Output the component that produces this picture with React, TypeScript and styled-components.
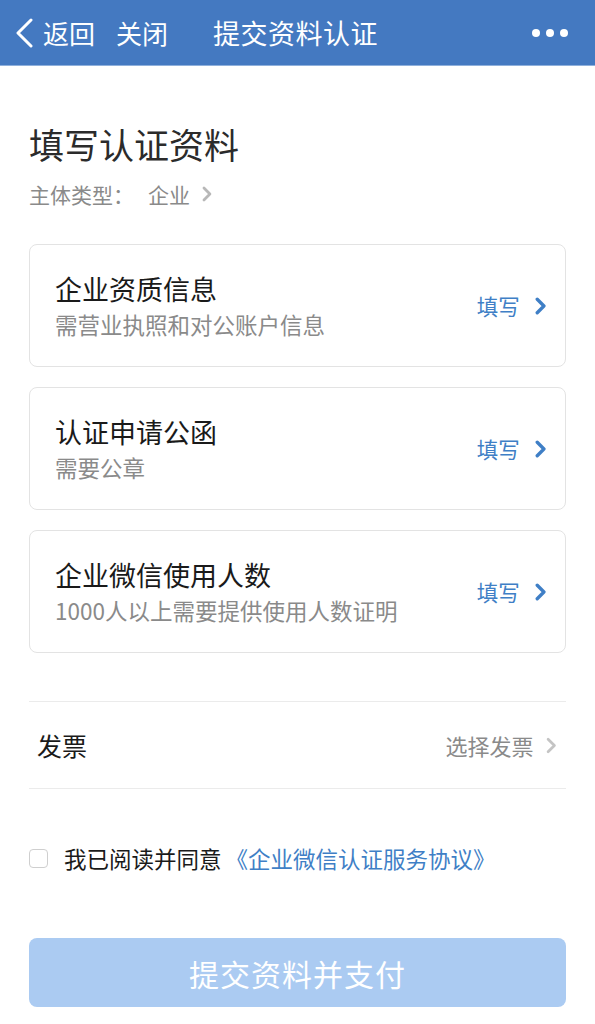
import React from "react"
import styled, { createGlobalStyle } from "styled-components"

const blue = "#4479c1"
const linkBlue = "#3f7fc6"
const gray = "#8a8a8a"

const GlobalStyle = createGlobalStyle`
  html, body {
    margin: 0;
    padding: 0;
    background: #fff;
  }
  body {
    font-family: "PingFang SC", "Noto Sans CJK SC", "Noto Sans", sans-serif;
  }
`

type Item = {
  title: string
  hint: string
}

const items: Item[] = [
  { title: "企业资质信息", hint: "需营业执照和对公账户信息" },
  { title: "认证申请公函", hint: "需要公章" },
  { title: "企业微信使用人数", hint: "1000人以上需要提供使用人数证明" },
]

const Chevron = ({ color, size = 14, weight = 2.4 }: { color: string; size?: number; weight?: number }) => (
  <svg width={size * 0.62} height={size} viewBox="0 0 10 16" fill="none">
    <path d="M2 2l6 6-6 6" stroke={color} strokeWidth={weight} strokeLinecap="round" strokeLinejoin="round" />
  </svg>
)

const App = () => {
  return (
    <Page>
      <GlobalStyle />
      <Header>
        <BackButton>
          <svg width="20" height="30" viewBox="0 0 20 30" fill="none">
            <path d="M17 2L4 15l13 13" stroke="#fff" strokeWidth="3" strokeLinecap="round" strokeLinejoin="round" />
          </svg>
          <HeaderText>返回</HeaderText>
        </BackButton>
        <HeaderText>关闭</HeaderText>
        <HeaderTitle>提交资料认证</HeaderTitle>
        <Dots>
          <Dot />
          <Dot />
          <Dot />
        </Dots>
      </Header>

      <Content>
        <PageTitle>填写认证资料</PageTitle>
        <TypeLine>
          <span>主体类型：</span>
          <TypeValue>企业</TypeValue>
          <Chevron color="#b8b8b8" size={16} weight={2.8} />
        </TypeLine>

        <CardList>
          {items.map(item => (
            <Card key={item.title}>
              <CardText>
                <CardTitle>{item.title}</CardTitle>
                <CardHint>{item.hint}</CardHint>
              </CardText>
              <CardAction>
                填写
                <Chevron color={linkBlue} size={18} weight={3} />
              </CardAction>
            </Card>
          ))}
        </CardList>

        <InvoiceRow>
          <InvoiceLabel>发票</InvoiceLabel>
          <InvoiceValue>
            选择发票
            <Chevron color="#c4c4c4" size={17} weight={2.6} />
          </InvoiceValue>
        </InvoiceRow>

        <Agreement>
          <Checkbox />
          <span>我已阅读并同意</span>
          <AgreementLink>《企业微信认证服务协议》</AgreementLink>
        </Agreement>

        <SubmitButton>提交资料并支付</SubmitButton>
      </Content>
    </Page>
  )
}

export default App

const Page = styled.div`
  width: 595px;
  height: 1024px;
  overflow: hidden;
  background: #fff;
`

const Header = styled.div`
  height: 66px;
  background: ${blue};
  border-bottom: 1px solid #8fb0dc;
  display: flex;
  align-items: center;
  padding: 0 0 0 14px;
  color: #fff;
  box-sizing: border-box;
`

const BackButton = styled.div`
  display: flex;
  align-items: center;
  gap: 9px;
  margin-right: 21px;
`

const HeaderText = styled.span`
  font-size: 26px;
  line-height: 1;
  color: #fff;
`

const HeaderTitle = styled.span`
  font-size: 27px;
  font-weight: 400;
  margin-left: 45px;
  letter-spacing: 0.5px;
`

const Dots = styled.div`
  margin-left: auto;
  margin-right: 27px;
  display: flex;
  gap: 6px;
`

const Dot = styled.span`
  width: 8px;
  height: 8px;
  border-radius: 50%;
  background: #fff;
`

const Content = styled.div`
  padding: 58px 29px 0 29px;
`

const PageTitle = styled.h1`
  margin: 0;
  font-size: 35px;
  font-weight: 400;
  color: #2b2b2b;
  line-height: 40px;
`

const TypeLine = styled.div`
  margin-top: 15px;
  display: flex;
  align-items: center;
  font-size: 21px;
  color: ${gray};
  line-height: 30px;
`

const TypeValue = styled.span`
  margin-left: 14px;
  margin-right: 12px;
`

const CardList = styled.div`
  margin-top: 35px;
  display: flex;
  flex-direction: column;
  gap: 20px;
`

const Card = styled.div`
  height: 123px;
  box-sizing: border-box;
  border: 1px solid #e3e3e3;
  border-radius: 8px;
  display: flex;
  align-items: center;
  padding: 0 19px 0 25px;
`

const CardText = styled.div`
  flex: 1;
  display: flex;
  flex-direction: column;
  gap: 3px;
`

const CardTitle = styled.div`
  font-size: 27px;
  color: #1a1a1a;
  line-height: 34px;
`

const CardHint = styled.div`
  font-size: 22.5px;
  color: ${gray};
  line-height: 30px;
`

const CardAction = styled.div`
  display: flex;
  align-items: center;
  gap: 15px;
  font-size: 21.5px;
  color: ${linkBlue};
`

const InvoiceRow = styled.div`
  margin-top: 48px;
  height: 86px;
  border-top: 1px solid #ebebeb;
  border-bottom: 1px solid #ebebeb;
  display: flex;
  align-items: center;
  justify-content: space-between;
  padding: 0 9px 0 8px;
`

const InvoiceLabel = styled.span`
  font-size: 25px;
  color: #1a1a1a;
`

const InvoiceValue = styled.span`
  display: flex;
  align-items: center;
  gap: 13px;
  font-size: 22px;
  color: ${gray};
`

const Agreement = styled.div`
  margin-top: 53px;
  display: flex;
  align-items: center;
  font-size: 22.5px;
  color: #1a1a1a;
`

const Checkbox = styled.span`
  width: 17px;
  height: 17px;
  border: 1.5px solid #cfcfcf;
  border-radius: 4px;
  margin-right: 16px;
  flex-shrink: 0;
`

const AgreementLink = styled.span`
  color: ${linkBlue};
  margin-left: 4px;
  font-size: 22.5px;
`

const SubmitButton = styled.div`
  margin-top: 64px;
  height: 69px;
  border-radius: 8px;
  background: #abcbf2;
  color: #fff;
  font-size: 30px;
  display: flex;
  align-items: center;
  justify-content: center;
  letter-spacing: 1px;
`
